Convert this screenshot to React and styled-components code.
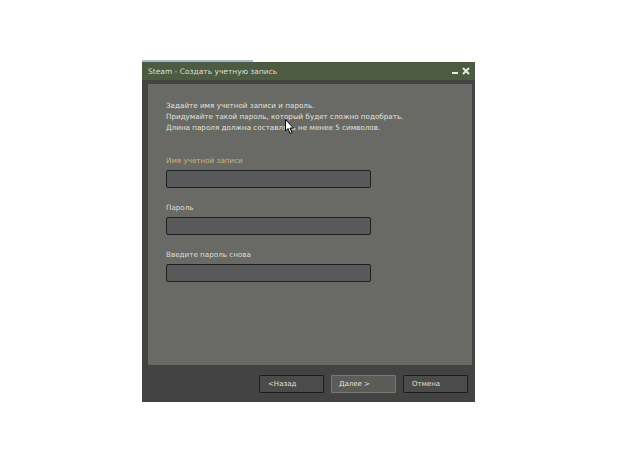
import styled, { createGlobalStyle } from 'styled-components';

const GlobalStyle = createGlobalStyle`
  html, body {
    margin: 0;
    background: #ffffff;
    font-family: "DejaVu Sans", Verdana, sans-serif;
  }
`;

const Page = styled.div`
  padding: 60px 0 0 142px;
  width: 620px;
  height: 465px;
  box-sizing: border-box;
`;

const Tab = styled.div`
  width: 111px;
  height: 2px;
  background: #a9bccb;
`;

const Window = styled.div`
  width: 333px;
  height: 340px;
  display: flex;
  flex-direction: column;
  background: #434343;
  position: relative;
`;

const TitleBar = styled.div`
  height: 18px;
  background: #4e5b43;
  display: flex;
  align-items: center;
  justify-content: space-between;
  padding: 0 5px 0 6px;
  color: #d9ddd2;
  font-size: 7.5px;
`;

const Controls = styled.div`
  display: flex;
  align-items: center;
  gap: 4px;
`;

const Body = styled.div`
  flex: 1;
  display: flex;
  flex-direction: column;
  padding: 4px 3px 0 6px;
`;

const Panel = styled.div`
  height: 281px;
  background: #696a65;
  padding: 16px 18px 0;
  box-sizing: border-box;
  display: flex;
  flex-direction: column;
`;

const Intro = styled.p`
  margin: 0 0 23px;
  color: #e2e2dc;
  font-size: 7.2px;
  line-height: 11px;
`;

const Label = styled.div`
  color: ${({ $active }) => ($active ? '#c9b27a' : '#dcdcd6')};
  font-size: 7.2px;
  margin-bottom: 5px;
`;

const Field = styled.div`
  width: 205px;
  height: 18px;
  box-sizing: border-box;
  background: #58595a;
  border: 1px solid #1f1f1f;
  border-radius: 2px;
  margin-bottom: 15px;
`;

const Footer = styled.div`
  flex: 1;
  display: flex;
  justify-content: flex-end;
  align-items: flex-start;
  gap: 7px;
  padding: 10px 4px 0 0;
`;

const Button = styled.div`
  width: 65px;
  height: 18px;
  box-sizing: border-box;
  display: flex;
  align-items: center;
  padding-left: ${({ $pad }) => $pad}px;
  font-size: 7px;
  color: #e0e0da;
  background: ${({ $primary }) => ($primary ? '#5b5c58' : '#4b4b4a')};
  border: 1px solid ${({ $primary }) => ($primary ? '#777873' : '#1c1c1c')};
  border-radius: 1px;
`;

const Cursor = styled.svg`
  position: absolute;
  left: 143px;
  top: 57px;
`;

export default function App() {
  return (
    <>
      <GlobalStyle />
      <Page>
        <Tab />
        <Window>
          <TitleBar>
            <span>Steam - Создать учетную запись</span>
            <Controls>
              <svg width="6" height="8" viewBox="0 0 6 8">
                <rect x="0" y="5" width="6" height="2" fill="#e4e8de" />
              </svg>
              <svg width="8" height="8" viewBox="0 0 8 8">
                <path d="M1 1 L7 7 M7 1 L1 7" stroke="#e4e8de" strokeWidth="2" />
              </svg>
            </Controls>
          </TitleBar>
          <Body>
            <Panel>
              <Intro>
                Задайте имя учетной записи и пароль.<br />
                Придумайте такой пароль, который будет сложно подобрать.<br />
                Длина пароля должна составлять не менее 5 символов.
              </Intro>
              <Label $active>Имя учетной записи</Label>
              <Field />
              <Label>Пароль</Label>
              <Field />
              <Label>Введите пароль снова</Label>
              <Field />
            </Panel>
            <Footer>
              <Button $pad={8}>&lt;Назад</Button>
              <Button $pad={7} $primary>Далее &gt;</Button>
              <Button $pad={8}>Отмена</Button>
            </Footer>
          </Body>
          <Cursor width="10" height="16" viewBox="0 0 10 16">
            <path d="M0.5 0.5 L0.5 12 L3 9.5 L5 14.5 L7 13.6 L5 9 L8.5 9 Z" fill="#ffffff" stroke="#000" strokeWidth="1" />
          </Cursor>
        </Window>
      </Page>
    </>
  );
}
